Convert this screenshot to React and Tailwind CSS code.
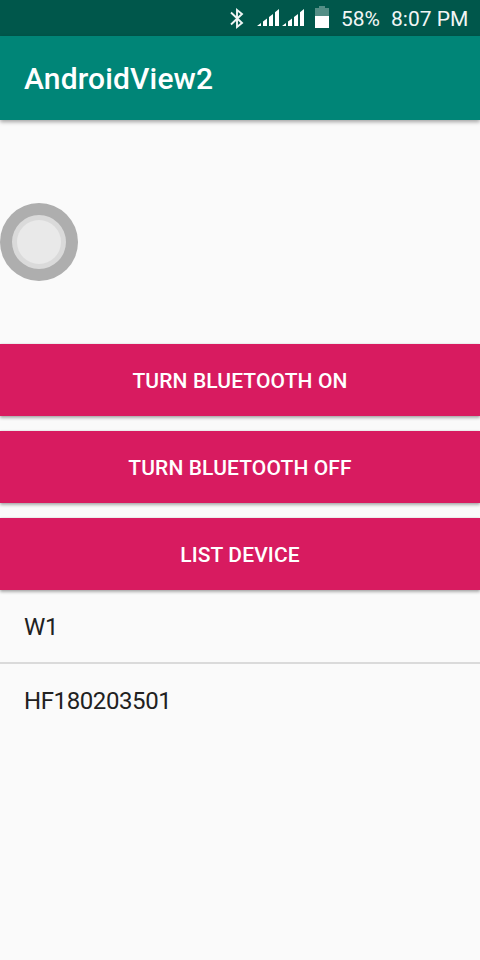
function BluetoothIcon() {
  return (
    <svg className="mt-2 ml-[230px] h-[21px] w-[14px] shrink-0" viewBox="0 0 14 21" fill="none" stroke="#eef4f3" strokeWidth="1.9">
      <path d="M1 4.5 12 15 7 19V2l5 4L1 16.5" />
    </svg>
  );
}

function SignalIcon({ className }) {
  return (
    <svg className={`mt-[9px] h-[17px] w-[22px] shrink-0 ${className}`} viewBox="0 0 22 17" fill="#fff">
      <path d="M0 17 4 14V17ZM6 12.5 10 9.5V17H6ZM12 8 16 5V17H12ZM18 3.2 22 0V17H18Z" />
    </svg>
  );
}

function BatteryIcon() {
  return (
    <svg className="mt-1.5 ml-[11px] h-[22px] w-[14px] shrink-0" viewBox="0 0 14 22">
      <path d="M4 0H10V2H14V10H0V2H4Z" fill="#548e86" />
      <path d="M0 10H14V22H0Z" fill="#fff" />
    </svg>
  );
}

function ActionButton({ children }) {
  return (
    <button className="flex h-[72px] w-full items-center justify-center bg-[#d81b60] pt-[2px] text-[21px] leading-6 font-medium tracking-[0.12px] text-white uppercase shadow-[0_2px_3px_rgba(0,0,0,0.3),0_0_2px_rgba(0,0,0,0.12)]">
      {children}
    </button>
  );
}

export default function App() {
  return (
    <div className="flex h-[960px] w-[480px] flex-col overflow-hidden bg-[#fafafa] font-['Roboto',sans-serif]">
      <div className="flex h-9 shrink-0 items-start bg-[#00574b] text-[21px] leading-6 whitespace-nowrap text-[#f2f6f5]">
        <BluetoothIcon />
        <SignalIcon className="ml-[13px]" />
        <SignalIcon className="ml-[3px]" />
        <BatteryIcon />
        <span className="mt-[7px] ml-3">58%</span>
        <span className="mt-[7px] ml-[11px]">8:07 PM</span>
      </div>
      <header className="relative flex h-[84px] shrink-0 items-center bg-[#008577] pl-6 shadow-[0_2px_4px_rgba(0,0,0,0.35)]">
        <h1 className="pt-px text-[30px] leading-9 font-medium tracking-[0.15px] text-white">AndroidView2</h1>
      </header>
      <main className="flex flex-col">
        <div className="h-[224px] pt-[83px]">
          <div className="flex size-[78px] items-center justify-center rounded-full bg-[#aeaeae]">
            <div className="flex size-[54px] items-center justify-center rounded-full bg-[#dadada]">
              <div className="size-11 rounded-full bg-[#e9e9e9]" />
            </div>
          </div>
        </div>
        <div className="flex flex-col gap-[15px]">
          <ActionButton>Turn Bluetooth On</ActionButton>
          <ActionButton>Turn Bluetooth Off</ActionButton>
          <ActionButton>List Device</ActionButton>
        </div>
        <ul className="text-2xl tracking-[-0.4px] text-[#212121]">
          <li className="flex h-[74px] items-center border-b-2 border-[#dadada] pt-[2px] pl-6">W1</li>
          <li className="flex h-[72px] items-center pt-[2px] pl-6">HF180203501</li>
        </ul>
      </main>
    </div>
  );
}
